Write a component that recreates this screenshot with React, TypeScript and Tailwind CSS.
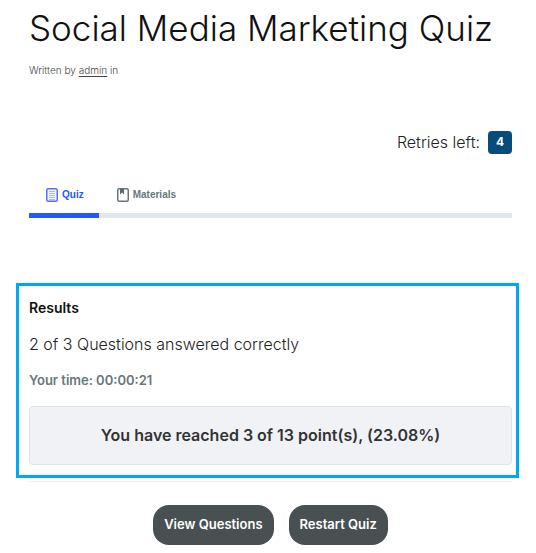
const TABS = [
    { id: "quiz", label: "Quiz", active: true },
    { id: "materials", label: "Materials", active: false },
];

function QuizIcon() {
    return (
        <svg width="12" height="14" viewBox="0 0 12 14" fill="none" aria-hidden="true">
            <rect x="0.75" y="0.75" width="10.5" height="12.5" rx="1.5" fill="#f3f7ff" stroke="#5b6ef2" strokeWidth="1.5" />
            <path d="M3 3.5h6M3 5.5h6M3 7.5h6M3 9.5h6M3 11.5h6" stroke="#a9b9f5" />
        </svg>
    );
}

function MaterialsIcon() {
    return (
        <svg width="12" height="14" viewBox="0 0 12 14" fill="none" aria-hidden="true">
            <rect x="0.75" y="0.75" width="10.5" height="12.5" rx="1.5" fill="#fff" stroke="#68777b" strokeWidth="1.5" />
            <path d="M3 1h4v5.5L5 4.5l-2 2z" fill="#5b696d" />
        </svg>
    );
}

function ResultsPanel() {
    return (
        <section className="-ml-[13px] -mr-[7px] border-[3px] border-[#00a8f3] pt-2.5 pr-1 pb-2.5 pl-2.5">
            <h2 className="text-sm font-semibold leading-6 text-[#111]">Results</h2>
            <p className="mt-3 text-base font-light leading-6 text-[#222]">2 of 3 Questions answered correctly</p>
            <p className="mt-3 text-[13px] font-semibold leading-6 text-[#68777b]">Your time: 00:00:21</p>
            <div className="mt-3.5 rounded border border-[#dfe4eb] bg-[#f0f2f6] py-4 text-center text-base font-semibold leading-[25px] text-[#333]">
                You have reached 3 of 13 point(s), (23.08%)
            </div>
        </section>
    );
}

export default function App() {
    return (
        <main className="bg-white pl-[29px] pr-6 pb-2 font-['Inter',sans-serif] text-[#222]">
            <h1 className="pt-1 text-[35px] font-light leading-[48px] whitespace-nowrap text-[#111]">Social Media Marketing Quiz</h1>
            <p className="mt-2.5 text-[10px] font-light leading-4 text-[#444]">
                Written by <a href="#author" className="underline underline-offset-2">admin</a> in
            </p>

            {/* Retries */}
            <div className="mt-[52px] flex items-center justify-end gap-2 text-base font-light leading-6">
                <span>Retries left:</span>
                <span className="flex h-[23px] w-6 items-center justify-center rounded bg-[#064b7a] text-xs font-bold text-white">4</span>
            </div>

            {/* Tabs */}
            <nav className="mt-6 flex border-b-[5px] border-[#e2e7ed] font-['Liberation_Sans',sans-serif] text-[10px] font-bold">
                {TABS.map((tab) => (
                    <button
                        key={tab.id}
                        type="button"
                        className={`-mb-[5px] flex items-center gap-1 border-b-[5px] pt-[7px] pb-2 leading-[20px] ${tab.active
                            ? "border-[#235af3] pl-[17px] pr-[15px] text-[#235af3]"
                            : "border-transparent px-[18px] text-[#68777b]"
                            }`}
                    >
                        {tab.id === "quiz" ? <QuizIcon /> : <MaterialsIcon />}
                        <span>{tab.label}</span>
                    </button>
                ))}
            </nav>

            {/* Results */}
            <div className="mt-[65px]">
                <ResultsPanel />
            </div>
            <hr className="mt-[3px] border-[#f1f2f4]" />

            <div className="mt-[23px] flex justify-center gap-[15px]">
                <button type="button" className="h-10 rounded-2xl bg-[#485052] px-[11px] text-[13px] font-semibold text-white">View Questions</button>
                <button type="button" className="h-10 rounded-2xl bg-[#485052] px-[11px] text-[13px] font-semibold text-white">Restart Quiz</button>
            </div>
        </main>
    );
}
